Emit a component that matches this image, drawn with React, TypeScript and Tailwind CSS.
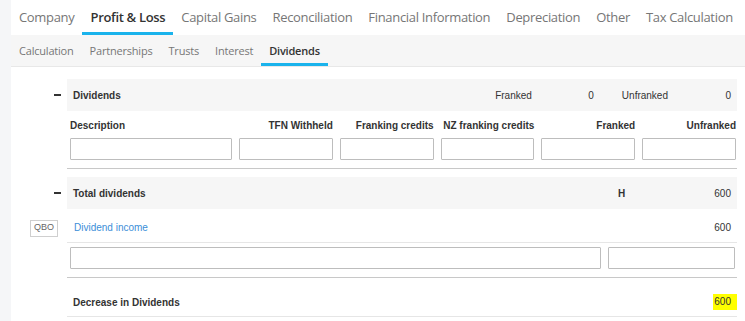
import React from "react";

const tabs = ["Company", "Profit & Loss", "Capital Gains", "Reconciliation", "Financial Information", "Depreciation", "Other", "Tax Calculation"];
const subtabs = ["Calculation", "Partnerships", "Trusts", "Interest", "Dividends"];

function Dash() {
  return <div className="w-[7px] h-[2px] bg-[#333]" />;
}

function Input() {
  return <div className="h-[22px] border border-[#bdbdbd] rounded-[1px] bg-white" />;
}

export default function App() {
  return (
    <div className="w-[745px] h-[321px] overflow-hidden flex bg-white" style={{ fontFamily: "'Open Sans', sans-serif" }}>
      <div className="w-[11px] shrink-0 bg-[#f5f6f8]" />
      <div className="flex-1 flex flex-col min-w-0">
        <div className="h-[35px] flex items-stretch bg-white whitespace-nowrap">
          {tabs.map((t) => {
            const active = t === "Profit & Loss";
            return (
              <div
                key={t}
                className={`px-2 flex items-center pt-[4px] text-[13px] tracking-[-0.32px] border-b-[3px] ${active ? "border-[#1ab3ec] text-[#333] font-semibold" : "border-transparent text-[#767676]"}`}
              >
                {t}
              </div>
            );
          })}
        </div>
        <div className="h-[32px] flex items-stretch bg-[#f6f6f6] border-b border-[#e8e8e8] whitespace-nowrap">
          {subtabs.map((t) => {
            const active = t === "Dividends";
            return (
              <div
                key={t}
                className={`px-2 flex items-center pt-[4px] text-[11px] tracking-[-0.2px] border-b-[3px] ${active ? "border-[#1ab3ec] text-[#333] font-semibold" : "border-transparent text-[#767676]"}`}
              >
                {t}
              </div>
            );
          })}
        </div>

        <div className="flex-1 flex flex-col pr-[8px] text-[10px] text-[#333]" style={{ fontFamily: "'Liberation Sans', Arial, sans-serif" }}>
          {/* Dividends header */}
          <div className="flex mt-[12px]">
            <div className="w-[56px] shrink-0 flex items-center justify-end pr-[6px]"><Dash /></div>
            <div className="flex-1 h-[32px] bg-[#f6f6f6] flex items-center pl-[6px] pr-[6px]">
              <span className="font-bold flex-1">Dividends</span>
              <span>Franked</span>
              <span className="w-[62px] text-right">0</span>
              <span className="ml-[28px]">Unfranked</span>
              <span className="w-[63px] text-right">0</span>
            </div>
          </div>
          <div className="flex">
            <div className="w-[56px] shrink-0" />
            <div className="flex-1 border-b border-[#c8c8c8] pl-[3px] pr-[1px] pb-[8px]">
              <div className="grid grid-cols-[162px_repeat(5,1fr)] gap-x-[7px] font-bold">
                <div className="h-[27px] flex items-end pb-[5px]">Description</div>
                <div className="h-[27px] flex items-end justify-end pb-[5px]">TFN Withheld</div>
                <div className="h-[27px] flex items-end justify-end pb-[5px]">Franking credits</div>
                <div className="h-[27px] flex items-end justify-end pb-[5px]">NZ franking credits</div>
                <div className="h-[27px] flex items-end justify-end pb-[5px]">Franked</div>
                <div className="h-[27px] flex items-end justify-end pb-[5px]">Unfranked</div>
              </div>
              <div className="grid grid-cols-[162px_repeat(5,1fr)] gap-x-[7px]">
                <Input /><Input /><Input /><Input /><Input /><Input />
              </div>
            </div>
          </div>

          {/* Total dividends */}
          <div className="flex mt-[8px]">
            <div className="w-[56px] shrink-0 flex items-center justify-end pr-[6px]"><Dash /></div>
            <div className="flex-1 h-[32px] bg-[#f6f6f6] flex items-center pl-[6px] pr-[6px] font-bold">
              <span className="flex-1">Total dividends</span>
              <span className="w-[20px]">H</span>
              <span className="w-[93px] text-right font-normal">600</span>
            </div>
          </div>
          <div className="flex">
            <div className="w-[56px] shrink-0 flex items-center justify-end pr-[9px] pt-[4px]">
              <div className="w-[28px] h-[17px] border border-[#cfcfcf] flex items-center justify-center text-[9px] text-[#666]">QBO</div>
            </div>
            <div className="flex-1 h-[34px] border-b border-[#e6e6e6] flex items-center pl-[7px] pr-[6px] pt-[4px]">
              <span className="flex-1 text-[#3b8ed8]">Dividend income</span>
              <span>600</span>
            </div>
          </div>
          <div className="flex">
            <div className="w-[56px] shrink-0" />
            <div className="flex-1 border-b border-[#c8c8c8] pl-[3px] pr-[2px] pt-[4px] pb-[8px]">
              <div className="grid grid-cols-[1fr_127px] gap-x-[7px]">
                <Input /><Input />
              </div>
            </div>
          </div>
          <div className="flex">
            <div className="w-[56px] shrink-0" />
            <div className="flex-1 h-[39px] border-b border-[#e6e6e6] flex items-center pt-[10px] pl-[6px]">
              <span className="flex-1 font-bold">Decrease in Dividends</span>
              <span className="bg-[#ffff00] pl-[1px] pr-[6px] py-[2px] leading-[12px]">600</span>
            </div>
          </div>
        </div>
      </div>
    </div>
  );
}
